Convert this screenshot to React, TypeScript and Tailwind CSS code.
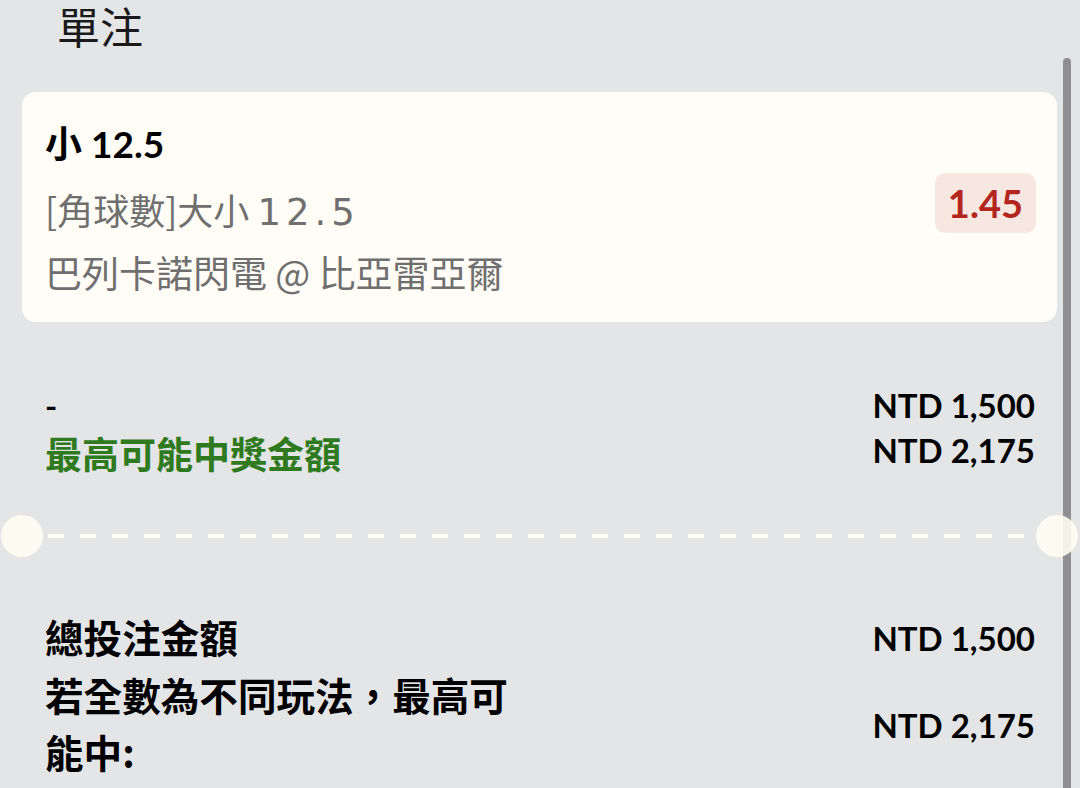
const latin = "font-['Lato','Noto_Sans_CJK_TC',sans-serif]";
const cjk = "font-['Noto_Sans_CJK_TC',sans-serif]";

function Cutout() {
  return <div className="relative w-[42px] h-[42px] shrink-0 rounded-full bg-[#fffdf2]/90" />;
}

export default function App() {
  return (
    <div className="relative h-[788px] w-full overflow-hidden bg-[#e4e5e7] text-black">
      {/* scrollbar thumb */}
      <div className="absolute right-[9px] top-[58px] bottom-0 w-[8px] rounded-t-full bg-[#8e8e93]" />

      {/* Title */}
      <div className={`${cjk} pl-[57px] text-[43px] leading-[50px] text-[#1a1a1a]`}>單注</div>

      {/* Selection card */}
      <div className="ml-[22px] mr-[23px] mt-[42px] flex items-center justify-between rounded-[14px] bg-[#fffdf6] pl-[23px] pr-[21px]">
        <div className="pt-[30px] pb-[18px]">
          <div className={`${latin} text-[37px] font-bold leading-[44px]`}>小 12.5</div>
          <div className={`${cjk} mt-[12px] text-[36px] leading-[63px] text-[#6f6f6f]`}>
            [角球數]大小{' '}
            <span className="font-['DejaVu_Sans',sans-serif] text-[37px] leading-none">
              <span className="tracking-[5px]">12.</span>5
            </span>
          </div>
          <div className={`${cjk} text-[37px] leading-[63px] text-[#6f6f6f]`}>巴列卡諾閃電 @ 比亞雷亞爾</div>
        </div>
        <div className={`${latin} -mt-[8px] rounded-[10px] bg-[#f7e7e1] px-[13px] text-[38px] font-bold leading-[60px] text-[#b3261e]`}>
          1.45
        </div>
      </div>

      {/* Stake / potential win */}
      <div className="mt-[61px] flex justify-between px-[45px]">
        <div>
          <div className={`${latin} text-[33px] font-bold leading-[45px]`}>-</div>
          <div className={`${cjk} pt-[3px] text-[37px] font-bold leading-[45px] text-[#2f7a1f]`}>最高可能中獎金額</div>
        </div>
        <div className={`${latin} text-right text-[33px] font-bold leading-[45px]`}>
          <div>NTD 1,500</div>
          <div>NTD 2,175</div>
        </div>
      </div>

      {/* Ticket tear line */}
      <div className="mt-[39px] flex items-center pl-px pr-[2px]">
        <Cutout />
        <div className="mx-[5px] h-[4px] flex-1 bg-[repeating-linear-gradient(to_right,#fffdf2_0_16px,transparent_16px_32px)]" />
        <Cutout />
      </div>

      {/* Totals */}
      <div className="mt-[49px] px-[45px]">
        <div className="flex items-center justify-between">
          <div className={`${cjk} text-[38.6px] font-bold leading-[56px]`}>總投注金額</div>
          <div className={`${latin} pt-[4px] text-[33px] font-bold leading-[56px]`}>NTD 1,500</div>
        </div>
        <div className="flex items-center justify-between">
          <div className={`${cjk} w-[475px] text-[38.6px] font-bold leading-[57px]`}>若全數為不同玩法，最高可能中:</div>
          <div className={`${latin} pt-[4px] text-[33px] font-bold leading-[56px]`}>NTD 2,175</div>
        </div>
      </div>
    </div>
  );
}
